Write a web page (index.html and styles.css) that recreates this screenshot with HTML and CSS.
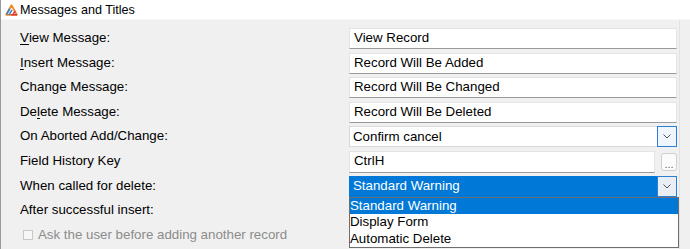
FILE: index.html
```html
<!DOCTYPE html>
<html lang="en">
<head>
    <meta charset="UTF-8">
    <meta name="viewport" content="width=device-width, initial-scale=1.0">
    <title>Messages and Titles</title>
    <link rel="stylesheet" href="styles.css">
</head>
<body>
    <div class="window">
        <div class="titlebar">
            <svg class="app-icon" width="13" height="12" viewBox="0 0 13 12">
                <path d="M6.5 1.2 L11.8 10.8 L1.2 10.8 Z" fill="none" stroke="#f28a22" stroke-width="1.8" stroke-linejoin="round"/>
                <path d="M1.6 10.4 L4.8 4.6 M4 11 L7 5.8" stroke="#2f7fd0" stroke-width="1.5"/>
                <path d="M6 10.8 L12 10.8 M8.2 10.2 L10.2 7" stroke="#e4373f" stroke-width="1.6"/>
            </svg>
            <span class="title-text">Messages and Titles</span>
        </div>
        <div class="panel">
            <div class="form-grid">
                <label class="field-label"><u>V</u>iew Message:</label>
                <div class="text-box">View Record</div>

                <label class="field-label"><u>I</u>nsert Message:</label>
                <div class="text-box">Record Will Be Added</div>

                <label class="field-label">Change Message:</label>
                <div class="text-box">Record Will Be Changed</div>

                <label class="field-label">De<u>l</u>ete Message:</label>
                <div class="text-box">Record Will Be Deleted</div>

                <label class="field-label">On Aborted Add/Change:</label>
                <div class="combo">
                    <span class="combo-value">Confirm cancel</span>
                    <span class="combo-btn">
                        <svg width="8" height="5" viewBox="0 0 8 5"><path d="M0.5 0.5 L4 4 L7.5 0.5" fill="none" stroke="#555" stroke-width="1"/></svg>
                    </span>
                </div>

                <label class="field-label">Field History Key</label>
                <div class="lookup">
                    <div class="text-box">CtrlH</div>
                    <span class="ellipsis-btn">...</span>
                </div>

                <label class="field-label">When called for delete:</label>
                <div class="combo combo-open">
                    <span class="combo-value">Standard Warning</span>
                    <span class="combo-btn">
                        <svg width="8" height="5" viewBox="0 0 8 5"><path d="M0.5 0.5 L4 4 L7.5 0.5" fill="none" stroke="#555" stroke-width="1"/></svg>
                    </span>
                    <ul class="combo-list">
                        <li class="selected">Standard Warning</li>
                        <li>Display Form</li>
                        <li>Automatic Delete</li>
                    </ul>
                </div>

                <label class="field-label">After successful insert:</label>
                <div></div>

                <label class="check-row">
                    <span class="check-box"></span>
                    <span>Ask the user before adding another record</span>
                </label>
            </div>
        </div>
    </div>
</body>
</html>
```

FILE: styles.css
```css
* {
    box-sizing: border-box;
}
body {
    margin: 0;
    font-family: 'Liberation Sans', Arial, sans-serif;
    font-size: 13.3px;
    color: #000;
    background: #f0f0f0;
}
.window {
    width: 690px;
    height: 249px;
    overflow: hidden;
    border-left: 1px solid #9a9a9a;
}
.titlebar {
    height: 20px;
    background: #fff;
    display: flex;
    align-items: center;
    padding-left: 4px;
    gap: 2px;
    border-bottom: 1px solid #f7f7f7;
}
.app-icon {
    flex: none;
    width: 13px;
    height: 12px;
}
.title-text {
    font-size: 12.6px;
    color: #000;
}
.panel {
    height: 229px;
    width: 679px;
    padding: 8px 0 0 19px;
    border-right: 1px solid #e2e2e2;
}
.form-grid {
    display: grid;
    grid-template-columns: 329px 328px;
    grid-auto-rows: 21px;
    row-gap: 3.6px;
}
.field-label {
    display: flex;
    align-items: center;
    padding-bottom: 2px;
    white-space: nowrap;
}
.field-label u {
    text-underline-offset: 2px;
}
.text-box {
    height: 21px;
    background: #fff;
    border: 1px solid #e4e4e4;
    border-bottom-color: #9a9a9a;
    padding: 0 4px;
    display: flex;
    align-items: center;
    padding-bottom: 2px;
    white-space: nowrap;
}
.combo {
    position: relative;
    height: 21px;
    display: flex;
    background: #fff;
    border: 1px solid #d9d9d9;
}
.combo-value {
    flex: 1;
    display: flex;
    align-items: center;
    padding: 0 3px;
    padding-bottom: 1px;
}
.combo-btn {
    width: 20px;
    margin: -1px -1px -1px 0;
    border: 1px solid #2c7fd6;
    background: #eef5fc;
    display: flex;
    align-items: center;
    justify-content: center;
}
.combo-open {
    border-color: #0078d7;
    background: #0078d7;
}
.combo-open .combo-value {
    color: #fff;
}
.combo-open .combo-btn {
    background: #e9eef5;
}
.combo-list {
    position: absolute;
    top: 20px;
    left: -1px;
    width: 330px;
    margin: 0;
    padding: 0;
    list-style: none;
    background: #fff;
    border: 1px solid #6e6e6e;
    z-index: 2;
}
.combo-list li {
    height: 16.5px;
    line-height: 16.5px;
    padding-left: 0;
    color: #000;
    white-space: nowrap;
}
.combo-list li.selected {
    background: #0078d7;
    color: #fff;
}
.lookup {
    display: flex;
    align-items: flex-start;
    gap: 6px;
}
.lookup .text-box {
    flex: 1;
    height: 22px;
}
.ellipsis-btn {
    flex: none;
    width: 16px;
    height: 18px;
    margin-top: 2px;
    border: 1px solid #cfcfcf;
    border-radius: 3px;
    background: #fbfbfb;
    font-size: 11px;
    line-height: 20px;
    text-align: center;
    color: #56677e;
}
.check-row {
    grid-column: 1 / 3;
    display: flex;
    align-items: center;
    gap: 5px;
    padding-left: 3px;
    color: #8c8c8c;
    padding-bottom: 1px;
}
.check-box {
    width: 10px;
    height: 10px;
    border: 1px solid #c8c8c8;
    background: #f7f7f7;
    margin-top: 1px;
}
```
